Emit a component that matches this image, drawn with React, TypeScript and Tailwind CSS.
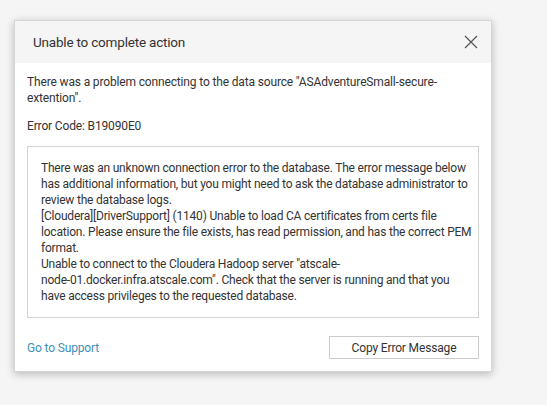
const lines = [
  "There was an unknown connection error to the database. The error message below",
  "has additional information, but you might need to ask the database administrator to",
  "review the database logs.",
  "[Cloudera][DriverSupport] (1140) Unable to load CA certificates from certs file",
  "location. Please ensure the file exists, has read permission, and has the correct PEM",
  "format.",
  'Unable to connect to the Cloudera Hadoop server "atscale-',
  'node-01.docker.infra.atscale.com". Check that the server is running and that you',
  "have access privileges to the requested database.",
];

export default function App() {
  return (
    <div className="h-[405px] w-[547px] bg-[#f5f5f5] pt-5 pl-[14px] font-['Roboto',sans-serif] text-[#333333]">
      <div className="w-[478px] bg-white shadow-[0_2px_8px_rgba(0,0,0,0.25)] border border-[#d6d6d6]">
        <div className="flex h-[42px] items-center justify-between bg-[#f5f5f5] pl-[18px] pr-[11px]">
          <span className="text-[13.5px] tracking-[-0.2px] text-[#333]">Unable to complete action</span>
          <svg width="14" height="14" viewBox="0 0 14 14" className="mr-[2px]">
            <path d="M1 1 L13 13 M13 1 L1 13" stroke="#555" strokeWidth="1.2" fill="none" />
          </svg>
        </div>
        <div className="px-3 pt-[11px] pb-3 text-[12px] leading-4 tracking-[-0.15px]">
          <p>There was a problem connecting to the data source "ASAdventureSmall-secure-extention".</p>
          <p className="mt-3">Error Code: B19090E0</p>
          <div className="mt-3 h-[172px] border border-[#d4d4d4] pl-[13px] pr-[4px] pt-[13px] tracking-[-0.2px]">
            {lines.map((l, i) => (
              <div key={i} className="whitespace-nowrap">
                {l}
              </div>
            ))}
          </div>
          <div className="mt-[18px] flex items-center justify-between">
            <a className="text-[12px] text-[#3f8fb8]">Go to Support</a>
            <button className="h-[23px] w-[150px] border border-[#cccccc] bg-white text-[12px] text-[#333]">
              Copy Error Message
            </button>
          </div>
        </div>
      </div>
    </div>
  );
}
